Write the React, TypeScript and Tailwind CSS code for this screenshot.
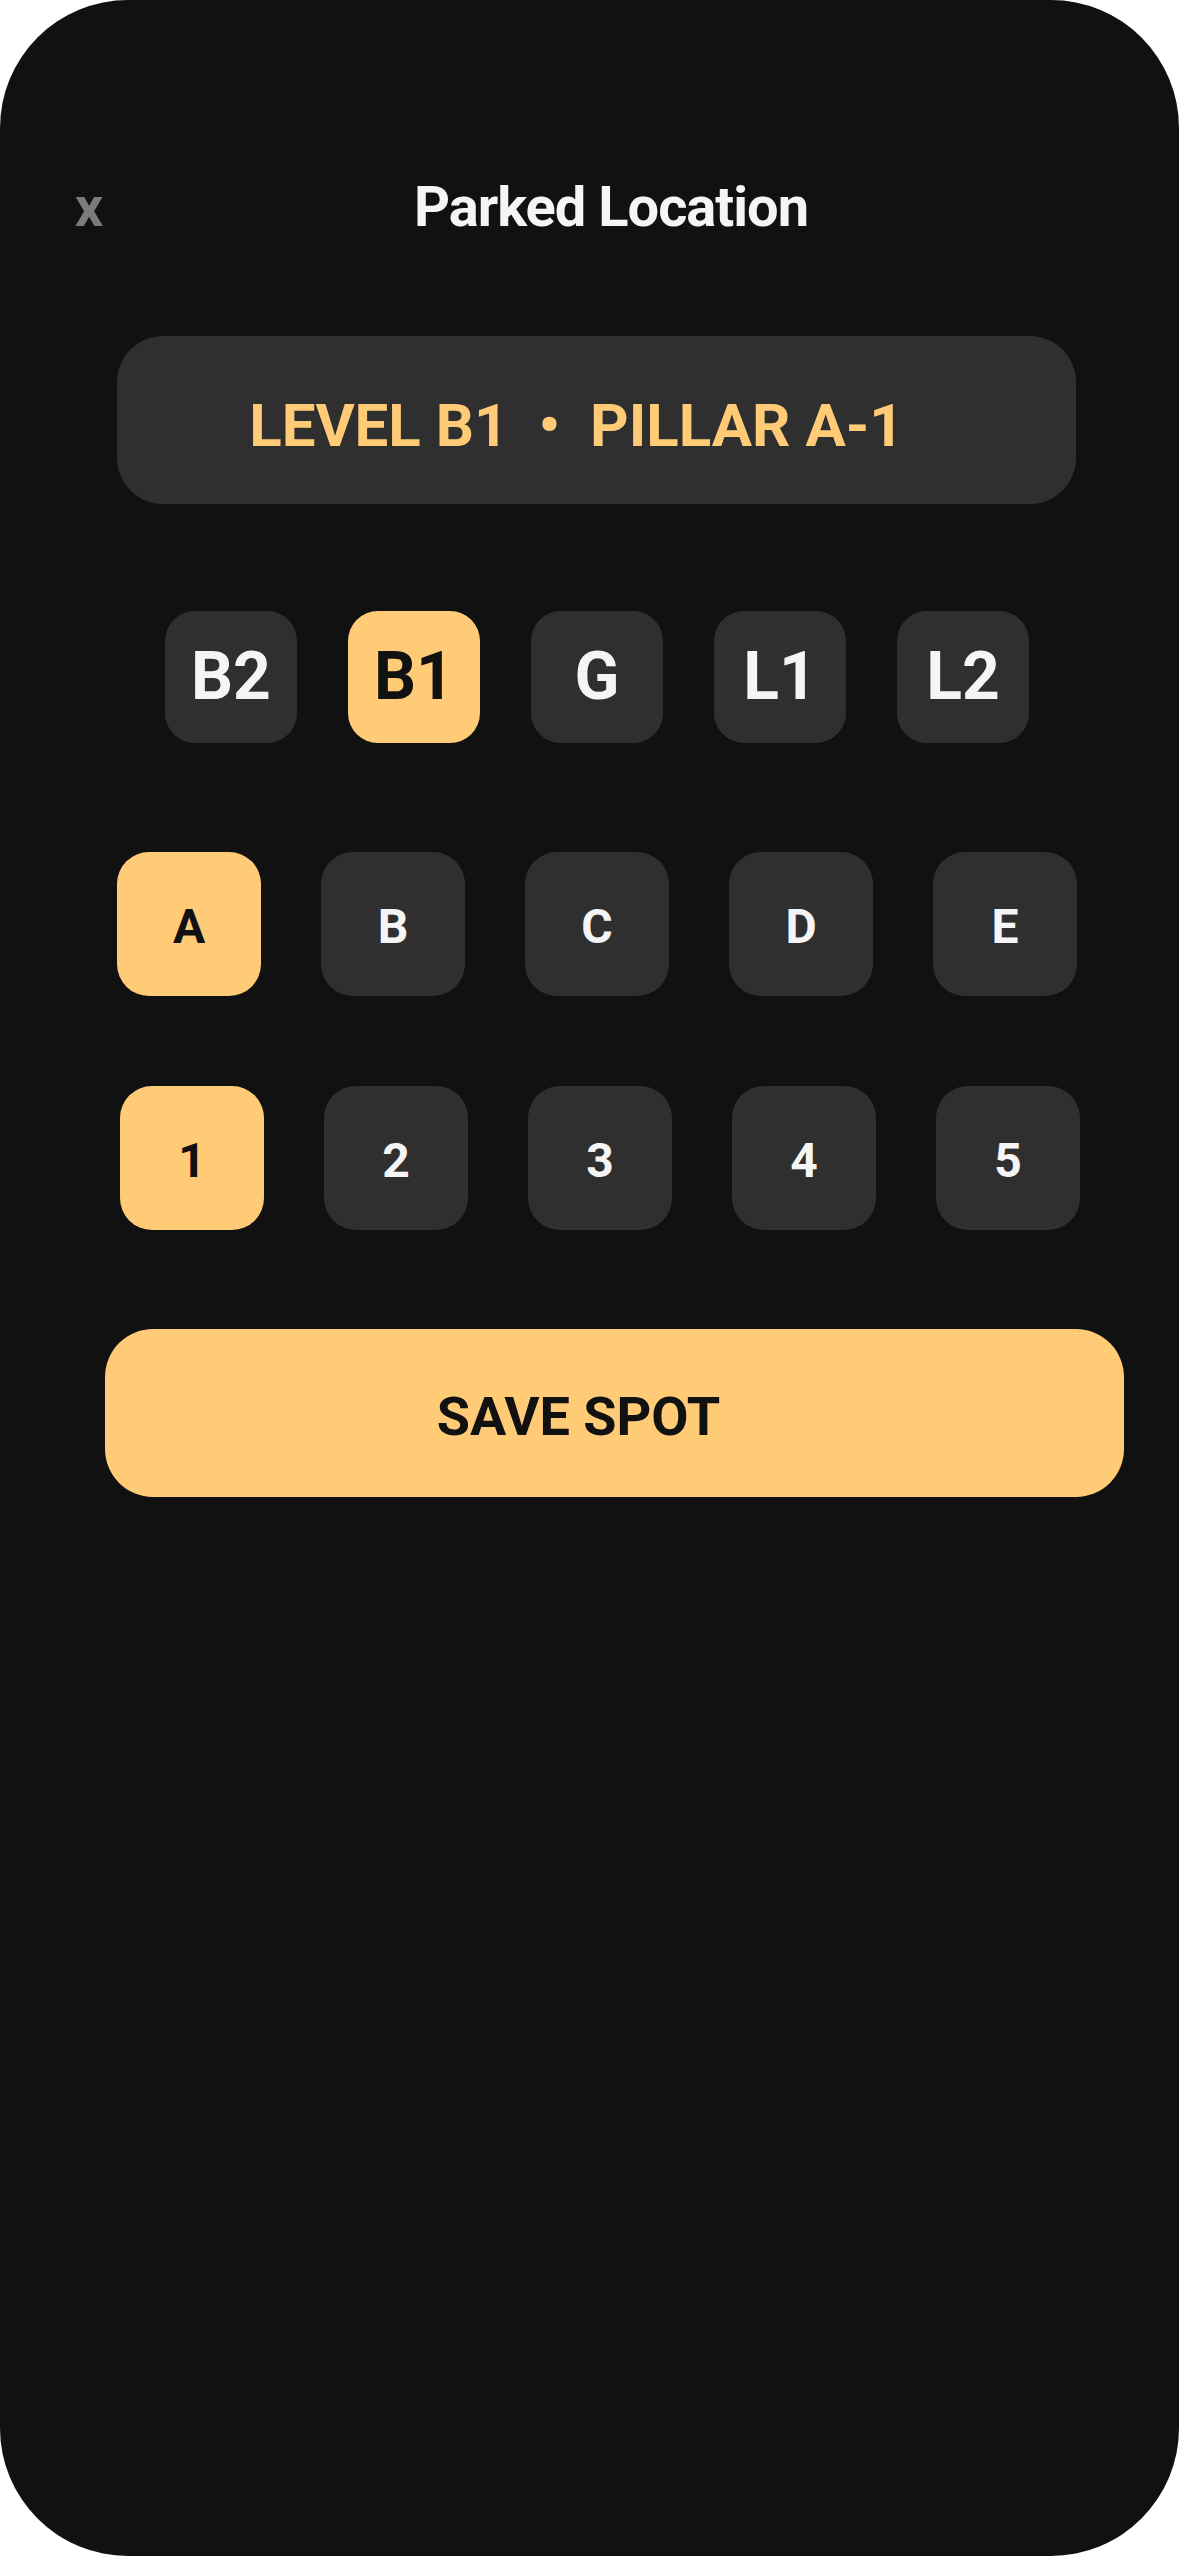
import React from 'react';

const levels = ['B2', 'B1', 'G', 'L1', 'L2'];
const pillars = ['A', 'B', 'C', 'D', 'E'];
const numbers = ['1', '2', '3', '4', '5'];

const App: React.FC = () => {
  const level = 'B1';
  const pillar = 'A';
  const num = '1';

  return (
    <div className="w-[1179px] h-[2556px] bg-white font-['Roboto',sans-serif]">
      <div className="h-full rounded-[128px] bg-[#111111] flex flex-col pt-[179px]">
        {/* HEADER */}
        <div className="flex items-center pl-[76px] pr-[59px] h-[56px]">
          <button className="text-[56px] leading-none font-bold text-[#7b7b7b] w-[26px] flex justify-center">x</button>
          <h1 className="flex-1 text-center text-[56px] leading-none font-bold tracking-[-1px] text-[#f5f5f5]">Parked Location</h1>
        </div>

        {/* RESUMO */}
        <div className="mt-[101px] ml-[117px] w-[959px] h-[168px] rounded-[46px] bg-[#2f2f2f] flex items-center justify-center gap-[30px] pt-[12px] pr-[40px] text-[60px] leading-none font-bold text-[#ffcb77]">
          <span>LEVEL {level}</span>
          <span>•</span>
          <span>PILLAR {pillar}-{num}</span>
        </div>

        {/* ANDARES */}
        <div className="mt-[107px] flex gap-[51px] pl-[165px]">
          {levels.map((l) => (
            <div
              key={l}
              className={
                'w-[132px] h-[132px] rounded-[30px] flex items-center justify-center text-[66px] leading-none font-bold ' +
                (l === level ? 'bg-[#ffcb77] text-[#111111]' : 'bg-[#2f2f2f] text-[#f5f5f5]')
              }
            >
              {l}
            </div>
          ))}
        </div>

        {/* PILARES */}
        <div className="mt-[109px] flex gap-[60px] pl-[117px]">
          {pillars.map((p) => (
            <div
              key={p}
              className={
                'w-[144px] h-[144px] rounded-[32px] flex items-center justify-center pt-[6px] text-[48px] leading-none font-bold ' +
                (p === pillar ? 'bg-[#ffcb77] text-[#111111]' : 'bg-[#2f2f2f] text-[#f5f5f5]')
              }
            >
              {p}
            </div>
          ))}
        </div>

        {/* NUMEROS */}
        <div className="mt-[90px] flex gap-[60px] pl-[120px]">
          {numbers.map((n) => (
            <div
              key={n}
              className={
                'w-[144px] h-[144px] rounded-[32px] flex items-center justify-center pt-[6px] text-[48px] leading-none font-bold ' +
                (n === num ? 'bg-[#ffcb77] text-[#111111]' : 'bg-[#2f2f2f] text-[#f5f5f5]')
              }
            >
              {n}
            </div>
          ))}
        </div>

        {/* SALVAR */}
        <div className="mt-[99px] pl-[105px]">
          <button className="w-[1019px] h-[168px] rounded-[48px] bg-[#ffcb77] flex items-center justify-center pr-[72px] pt-[8px] text-[54px] leading-none font-bold text-[#111111]">
            SAVE SPOT
          </button>
        </div>
      </div>
    </div>
  );
};

export default App;
